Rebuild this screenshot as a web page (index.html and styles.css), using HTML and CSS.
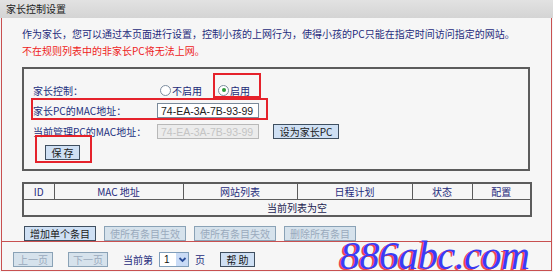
FILE: index.html
```html
<!DOCTYPE html>
<html lang="zh-CN">
<head>
    <meta charset="UTF-8">
    <title>家长控制设置</title>
    <link rel="stylesheet" href="styles.css">
</head>
<body>
    <div class="page">
        <div class="title-bar">家长控制设置</div>

        <div class="frame">
            <div class="main">
                <p class="intro">作为家长，您可以通过本页面进行设置，控制小孩的上网行为，使得小孩的PC只能在指定时间访问指定的网站。</p>
                <p class="warn">不在规则列表中的非家长PC将无法上网。</p>

                <div class="settings">
                    <div class="row">
                        <span class="label">家长控制：</span>
                        <span class="radios">
                            <span class="radio"><i class="dot"></i>不启用</span>
                            <span class="radio on"><i class="dot"></i>启用</span>
                        </span>
                    </div>
                    <div class="row row-mac">
                        <span class="label">家长PC的MAC地址：</span>
                        <span class="field">74-EA-3A-7B-93-99</span>
                    </div>
                    <div class="row row-cur">
                        <span class="label">当前管理PC的MAC地址：</span>
                        <span class="field off">74-EA-3A-7B-93-99</span>
                        <button class="btn set-btn">设为家长PC</button>
                    </div>
                    <div class="row row-save">
                        <button class="btn save-btn">保 存</button>
                    </div>

                    <div class="mark mark-on"></div>
                    <div class="mark mark-mac"></div>
                    <div class="mark mark-save"></div>
                </div>

                <table class="rules">
                    <colgroup>
                        <col style="width: 31px">
                        <col style="width: 129px">
                        <col style="width: 114px">
                        <col style="width: 115px">
                        <col style="width: 60px">
                        <col style="width: 59px">
                    </colgroup>
                    <tr>
                        <th>ID</th>
                        <th>MAC 地址</th>
                        <th>网站列表</th>
                        <th>日程计划</th>
                        <th>状态</th>
                        <th>配置</th>
                    </tr>
                    <tr>
                        <td colspan="6" class="empty">当前列表为空</td>
                    </tr>
                </table>

                <div class="actions">
                    <button class="btn">增加单个条目</button>
                    <button class="btn disabled">使所有条目生效</button>
                    <button class="btn disabled">使所有条目失效</button>
                    <button class="btn disabled">删除所有条目</button>
                </div>
            </div>

            <div class="pager">
                <button class="btn disabled pg-btn">上一页</button>
                <button class="btn disabled pg-btn">下一页</button>
                <span class="pg-text">当前第</span>
                <span class="select">
                    <span class="select-val">1</span>
                    <span class="select-arrow">
                        <svg width="9" height="9" viewBox="0 0 9 9"><path d="M1.5 3 L4.5 6 L7.5 3" fill="none" stroke="#2a4d9a" stroke-width="1.8"/></svg>
                    </span>
                </span>
                <span class="pg-text">页</span>
                <button class="btn help-btn">帮 助</button>
            </div>

            <div class="watermark">886abc.com</div>
        </div>
    </div>
</body>
</html>
```

FILE: styles.css
```css
body {
    margin: 0;
    font-family: "Noto Sans CJK SC", "DejaVu Sans", sans-serif;
    font-size: 10px;
    background: #f5f5f5;
}

.page {
    width: 553px;
    height: 272px;
    overflow: hidden;
}

.title-bar {
    height: 18px;
    line-height: 18px;
    padding-left: 6px;
    background: linear-gradient(#e2e2e2, #d4d4d4);
    color: #222;
    font-size: 10px;
}

.frame {
    position: relative;
    margin: 0 1px;
    height: 252px;
    border: 1px solid #c85050;
    border-top: none;
    background: #f6f6f6;
}

.main {
    padding: 7px 0 0 20px;
    height: 216px;
}

.intro, .warn {
    margin: 0;
    line-height: 17px;
    font-size: 10px;
}

.intro {
    color: #1f2c7c;
}

.warn {
    color: #ee1c1c;
}

.settings {
    position: relative;
    margin-top: 8px;
    width: 508px;
    padding: 11px 0 7px 9px;
    border: 2px solid #5c5c5c;
    box-sizing: border-box;
    height: 104px;
    color: #23307e;
}

.row {
    display: flex;
    align-items: center;
    height: 20px;
}

.row-mac, .row-cur {
    height: 21px;
}

.label {
    width: 124px;
}

.radios {
    display: flex;
    gap: 16px;
    margin-left: 3px;
    color: #1c2a78;
}

.radio {
    display: flex;
    align-items: center;
    gap: 1px;
}

.dot {
    width: 9px;
    height: 9px;
    border: 1px solid #7d8d9f;
    border-radius: 50%;
    background: #fff;
    display: flex;
    align-items: center;
    justify-content: center;
}

.radio.on .dot::after {
    content: "";
    width: 4px;
    height: 4px;
    border-radius: 50%;
    background: #2f9a3a;
}

.field {
    width: 102px;
    height: 15px;
    line-height: 15px;
    box-sizing: border-box;
    padding-left: 3px;
    border: 1px solid #7a8a9a;
    background: #fff;
    color: #222;
    font-family: "Liberation Sans", sans-serif;
    font-size: 10.5px;
}

.field.off {
    background: #ececec;
    border-color: #b8b8b8;
    color: #c4c4c4;
}

.btn {
    font-family: "Noto Sans CJK SC", sans-serif;
    font-size: 10px;
    height: 15px;
    line-height: 13px;
    padding: 0 5px;
    border: 1px solid #3f4f60;
    background: #cfe0f4;
    color: #1a1a1a;
    margin: 0;
}

.btn.disabled {
    border-color: #8aa2b6;
    background: #d6e2ec;
    color: #9aaabd;
}

.set-btn {
    margin-left: 14px;
    width: 66px;
    padding: 0;
}

.save-btn {
    margin-left: 12px;
    width: 35px;
    padding: 0;
}

.mark {
    position: absolute;
    border: 2px solid #e5222b;
}

.mark-on {
    left: 189px;
    top: 4px;
    width: 44px;
    height: 21px;
}

.mark-mac {
    left: 7px;
    top: 29px;
    width: 233px;
    height: 18px;
}

.mark-save {
    left: 11px;
    top: 66px;
    width: 53px;
    height: 24px;
}

.rules {
    margin-top: 11px;
    width: 508px;
    border-collapse: collapse;
    table-layout: fixed;
    border: 2px solid #5c5c5c;
    color: #1f2c7c;
}

.rules th, .rules td {
    border: 1px solid #5c5c5c;
    height: 15px;
    padding: 0;
    font-size: 10px;
    font-weight: normal;
    text-align: center;
}

.rules td.empty {
    color: #1c1c50;
    padding-left: 40px;
}

.actions {
    display: flex;
    gap: 8px;
    margin: 9px 0 0 2px;
}

.pager {
    display: flex;
    align-items: center;
    height: 35px;
    box-sizing: border-box;
    padding: 0 0 0 11px;
    border-top: 1px solid #c85050;
    color: #1f2c7c;
}

.pg-btn {
    width: 40px;
    padding: 0;
    margin-right: 15px;
}

.pg-text {
    margin-right: 6px;
}

.select {
    display: flex;
    align-items: center;
    height: 15px;
    width: 30px;
    box-sizing: border-box;
    border: 1px solid #7f9db9;
    background: #fff;
    margin-right: 6px;
}

.select-val {
    flex: 1;
    padding-left: 4px;
    color: #111;
    font-family: "Liberation Sans", sans-serif;
}

.select-arrow {
    width: 12px;
    height: 13px;
    background: #c9dbf6;
    display: flex;
    align-items: center;
    justify-content: center;
}

.help-btn {
    margin-left: 9px;
    width: 35px;
    padding: 0;
}

.watermark {
    position: absolute;
    left: 338px;
    top: 224px;
    font-family: "Liberation Serif", serif;
    font-style: italic;
    font-size: 40px;
    letter-spacing: -0.5px;
    line-height: 0.7;
    color: #3a3cf4;
    text-shadow: -2px 1px 0 rgba(236, 40, 50, 0.85);
    white-space: nowrap;
}
```
